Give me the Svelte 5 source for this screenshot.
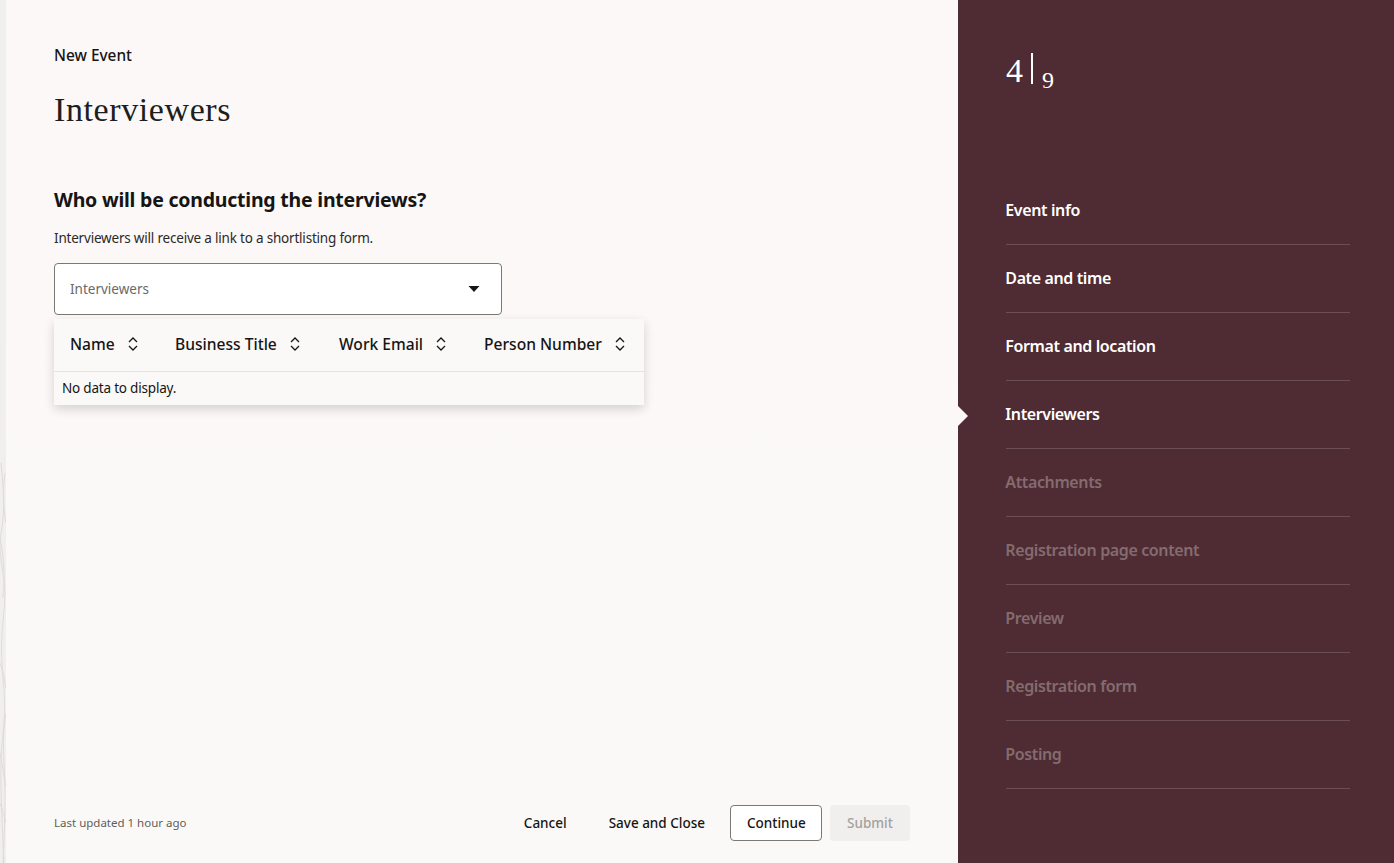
<script>
	const columns = ['Name', 'Business Title', 'Work Email', 'Person Number']
	const steps = [
		{ label: 'Event info', state: 'done' },
		{ label: 'Date and time', state: 'done' },
		{ label: 'Format and location', state: 'done' },
		{ label: 'Interviewers', state: 'current' },
		{ label: 'Attachments', state: 'todo' },
		{ label: 'Registration page content', state: 'todo' },
		{ label: 'Preview', state: 'todo' },
		{ label: 'Registration form', state: 'todo' },
		{ label: 'Posting', state: 'todo' }
	]
</script>

<div class="page">
	<div class="rail">
		<svg viewBox="0 0 6 400" width="6" height="400" fill="none" stroke="#dcd9d6" stroke-width="0.9">
			<path d="M1 0c3 30 4 50 0 70s4 40 4 60-5 40-3 70 4 40 1 70-3 50 1 130" />
			<path d="M5 10c-3 20-1 40 1 50M0 75c4 20 5 40 3 60" />
			<path d="M0 200c4 10 5 20 6 26M6 250c-3 20-3 30-2 50s2 40-1 100" />
			<path d="M0 290c3 14 4 26 6 34M0 340c3 8 4 14 6 20" />
		</svg>
	</div>

	<main class="content">
		<div class="top">
			<div class="eyebrow">New Event</div>
			<h1>Interviewers</h1>
			<h2>Who will be conducting the interviews?</h2>
			<p>Interviewers will receive a link to a shortlisting form.</p>

			<div class="select">
				<span>Interviewers</span>
				<svg width="12" height="6" viewBox="0 0 12 6"><path d="M0.5 0h11L6 6z" fill="#161513" /></svg>
			</div>

			<div class="dropdown">
				<div class="head">
					{#each columns as col}
						<div class="col">
							<span>{col}</span>
							<svg width="12" height="16" viewBox="0 0 12 16" fill="none" stroke="#161513" stroke-width="1.3">
								<path d="M2 6l4-4 4 4" />
								<path d="M2 10l4 4 4-4" />
							</svg>
						</div>
					{/each}
				</div>
				<div class="empty">No data to display.</div>
			</div>
		</div>

		<footer>
			<div class="updated">Last updated 1 hour ago</div>
			<div class="actions">
				<button class="plain">Cancel</button>
				<button class="plain">Save and Close</button>
				<button class="outline">Continue</button>
				<button class="disabled" disabled>Submit</button>
			</div>
		</footer>
	</main>

	<aside class="panel">
		<div class="counter">
			<span class="now">4</span>
			<span class="bar"></span>
			<span class="total">9</span>
		</div>
		<ul>
			{#each steps as step}
				<li class={step.state}><span>{step.label}</span></li>
			{/each}
		</ul>
	</aside>
</div>

<style>
	:global(body) {
		margin: 0;
		overflow: hidden;
	}

	.page {
		display: flex;
		height: 863px;
		font-family: "Noto Sans", "Open Sans", sans-serif;
		color: #161513;
	}

	.rail {
		flex: 0 0 6px;
		background: #f1efed;
		display: flex;
		align-items: flex-end;
		overflow: hidden;
	}

	.content {
		flex: 1;
		display: flex;
		flex-direction: column;
		justify-content: space-between;
		padding: 0 48px;
		background: linear-gradient(#fcf8f7 0, #fcf8f7 340px, #fbf9f7 440px);
	}

	.top {
		padding-top: 46px;
	}

	.eyebrow {
		font-size: 15.4px;
		line-height: 20px;
		font-weight: 500;
	}

	h1 {
		margin: 19px 0 0;
		font-family: "Liberation Serif", serif;
		font-size: 34px;
		line-height: 50px;
		font-weight: 400;
		letter-spacing: 0.6px;
		color: #201e1c;
	}

	h2 {
		margin: 50px 0 0;
		font-size: 19.5px;
		line-height: 30px;
		font-weight: 700;
		letter-spacing: -0.22px;
	}

	p {
		margin: 13px 0 0;
		font-size: 13.5px;
		line-height: 20px;
		letter-spacing: -0.2px;
		color: #2b2927;
	}

	.select {
		box-sizing: border-box;
		display: flex;
		align-items: center;
		justify-content: space-between;
		width: 448px;
		height: 52px;
		margin-top: 15px;
		padding: 0 21px 0 15px;
		background: #fff;
		border: 1px solid #7b7876;
		border-radius: 4px;
		font-size: 13.5px;
		color: #6b6967;
	}

	.dropdown {
		width: 590px;
		margin-top: 4px;
		background: #fbf9f8;
		box-shadow: 0 4px 10px rgba(0, 0, 0, 0.16);
	}

	.head {
		display: grid;
		grid-template-columns: 105px 164px 145px 1fr;
		height: 52px;
		border-bottom: 1px solid #e5e3e1;
	}

	.col {
		display: flex;
		align-items: center;
		gap: 12px;
		padding: 0 0 2px 16px;
		font-size: 15.6px;
		font-weight: 500;
		white-space: nowrap;
	}

	.empty {
		height: 33px;
		padding-left: 8px;
		font-size: 13.5px;
		line-height: 33px;
		letter-spacing: -0.2px;
	}

	footer {
		display: flex;
		align-items: center;
		justify-content: space-between;
		padding-bottom: 22px;
	}

	.updated {
		padding-bottom: 2px;
		font-size: 11.5px;
		color: #5f5d5a;
	}

	.actions {
		display: flex;
		align-items: center;
		gap: 8px;
	}

	button {
		box-sizing: border-box;
		height: 36px;
		padding: 0 16px;
		font: 500 13.5px "Noto Sans", "Open Sans", sans-serif;
		color: #161513;
		background: none;
		border: 1px solid transparent;
		border-radius: 4px;
	}

	.outline {
		width: 92px;
		border-color: #7b7876;
		background: #fff;
	}

	.disabled {
		width: 80px;
		background: #f1efed;
		color: #a3a19f;
	}

	.panel {
		flex: 0 0 436px;
		box-sizing: border-box;
		padding: 0 44px 0 48px;
		background: #4f2c33;
	}

	.counter {
		display: flex;
		align-items: flex-start;
		height: 177px;
		padding-top: 53px;
		box-sizing: border-box;
		font-family: "Liberation Serif", serif;
		color: #fff;
	}

	.now {
		font-size: 34px;
		line-height: 36px;
	}

	.bar {
		width: 2px;
		height: 31px;
		margin: 0 9px 0 8px;
		background: #fff;
	}

	.total {
		font-size: 24px;
		line-height: 24px;
		margin-top: 15px;
	}

	ul {
		margin: 0;
		padding: 0;
		list-style: none;
	}

	li {
		box-sizing: border-box;
		height: 68px;
		padding-bottom: 2px;
		display: flex;
		align-items: center;
		border-bottom: 1px solid #6c4f55;
		font-size: 16px;
		font-weight: 600;
		letter-spacing: -0.38px;
	}

	li span {
		margin-left: -0.7px;
	}

	.done,
	.current {
		color: #fff;
	}

	.todo {
		color: #846b70;
	}

	.current {
		position: relative;
	}

	.current::before {
		content: '';
		position: absolute;
		left: -48px;
		top: 25px;
		border-left: 10px solid #fcf8f7;
		border-top: 10px solid transparent;
		border-bottom: 10px solid transparent;
	}
</style>
